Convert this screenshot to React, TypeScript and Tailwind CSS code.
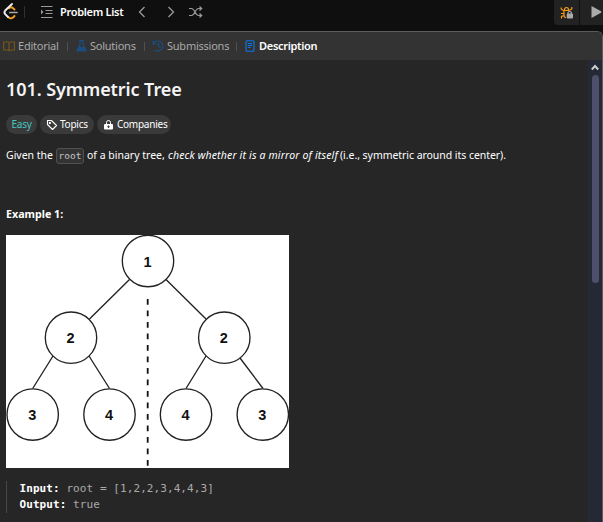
import React from "react";

const nodes = [
  { x: 142, y: 26, n: 1 },
  { x: 65, y: 102.7, n: 2 },
  { x: 218.3, y: 102.7, n: 2 },
  { x: 26.7, y: 179.5, n: 3 },
  { x: 103.5, y: 179.5, n: 4 },
  { x: 180, y: 179.5, n: 4 },
  { x: 256.8, y: 179.5, n: 3 },
];

function Tree() {
  return (
    <svg width="283" height="233" viewBox="0 0 283 233" className="block bg-white">
      <g stroke="#222" strokeWidth="1.35" fill="#fff">
        <path d="M123.500 44.500 83.500 84M160 44.500 200 84M47 121 26.700 153.500M83 121 103.500 153.500M200 121 180 153.500M234 123 257 153.500" />
        {nodes.map((c, i) => (
          <circle key={i} cx={c.x} cy={c.y} r="25.700" />
        ))}
      </g>
      <path d="M141.700 64V231" stroke="#111" strokeWidth="1.800" strokeDasharray="5.800 5.700" />
      {nodes.map((c, i) => (
        <text key={i} x={c.x - 0.5} y={c.y + 5.5} textAnchor="middle" fill="#111" className="font-['Liberation_Sans'] text-[14.500px] font-bold">
          {c.n}
        </text>
      ))}
    </svg>
  );
}

function Header() {
  return (
    <header className="flex h-[31px] shrink-0 items-start bg-[#0f0f0f]">
      <svg width="20" height="24" viewBox="0 0 20 24" fill="none" strokeWidth="1.900" strokeLinecap="round" className="shrink-0">
        <path d="M8.500 17.200Q10.800 19.300 13 17.500L14.500 16M9 8.200Q11 6.500 12.800 8L14.500 9.500" stroke="#f5a11c" />
        <path d="M12 4 5.200 10.500Q3.700 12.300 5.200 14.200L8 17" stroke="#eee" />
        <path d="M9.800 12.500H17" stroke="#aaa" strokeWidth="1.700" />
      </svg>
      <span className="mt-1.5 ml-1 h-3 w-px bg-[#303030]" />
      <svg width="13" height="12" viewBox="0 0 13 12" className="mt-1.5 ml-[15px]" stroke="#999" fill="#999">
        <path d="M1 .500H12.500M5.500 4.500H12.500M5.500 7.500H12.500M1 11.500H12.500" />
        <path d="M1 3.500 3.500 6 1 8.500Z" stroke="none" />
      </svg>
      <span className="mt-1 ml-[7px] w-[64px] whitespace-nowrap text-[11px] leading-4 font-semibold tracking-[-0.300px] text-white">Problem List</span>
      <svg width="8" height="12" viewBox="0 0 8 12" className="mt-1.5 ml-[14px]" fill="none" stroke="#999" strokeWidth="1.300"><path d="M6.500 1 1.500 6 6.500 11" /></svg>
      <svg width="8" height="12" viewBox="0 0 8 12" className="mt-1.5 ml-[21px]" fill="none" stroke="#999" strokeWidth="1.300"><path d="M1.500 1 6.500 6 1.500 11" /></svg>
      <svg width="14" height="12" viewBox="0 0 14 12" className="mt-1.5 ml-[14px]" fill="none" stroke="#999" strokeWidth="1.200">
        <path d="M0 2.500H2.500C6 2.500 6 9.500 9.500 9.500H13M0 9.500H2.500C6 9.500 6 2.500 9.500 2.500H13M10.500 .500 12.700 2.500 10.500 4.500M10.500 7.500 12.700 9.500 10.500 11.500" />
      </svg>
      <div className="ml-auto flex h-[25px] w-[49px] gap-px">
        <div className="flex w-[25px] justify-center rounded-bl bg-[#222]">
          <svg width="14" height="14" viewBox="0 0 14 14" className="mt-[6px]" fill="none" stroke="#f59b16" strokeWidth="1.200">
            <path d="M4.500 4Q4.500 1.500 6.500 1.500T8.500 4M4 4.500H9M4 4.500V9Q4 11.500 6 11.500M1.200 1.500V3L4 5M11.800 1V3L9 4.500M1 7.500H4M4 9.500 1.500 10.500V12.500" />
            <path d="M8 8V6.800Q8 5.500 9.700 5.500T11.400 6.800V8" stroke="#aaa" /><rect x="6.700" y="7.500" width="6.300" height="5" rx="1" fill="#aaa" stroke="none" />
          </svg>
        </div>
        <div className="flex flex-1 bg-[#222]">
          <svg width="12" height="14" viewBox="0 0 12 14" className="mt-[5px] ml-[10px]" fill="#aaa"><path d="M1.500 1 11 6.300Q12 7 11 7.700L1.500 13Z" /></svg>
        </div>
      </div>
    </header>
  );
}

const Divider = () => <span className="ml-[7px] h-[9px] w-px bg-[#505050]" />;

function Tabs() {
  return (
    <nav className="flex h-[28px] shrink-0 items-center bg-[#333] pl-[3px] text-[11px] tracking-[-0.240px] text-[#aaa]">
      <svg width="12" height="11" viewBox="0 0 12 11" fill="none" stroke="#735719" strokeWidth="1.200"><path d="M.600 1H4.500Q6 1 6 2.500V10Q5.500 9 4.500 9H.600ZM11.400 1H7.500Q6 1 6 2.500V10Q6.500 9 7.500 9H11.400Z" /></svg>
      <span className="ml-[3px] w-[42px] whitespace-nowrap">Editorial</span>
      <Divider />
      <svg width="11" height="12" viewBox="0 0 11 12" className="ml-2" fill="#1c4d80"><path d="M3 0H8V1H7.500V4L10.500 10Q11 11.500 9.500 11.500H1.500Q0 11.500 .500 10L3.500 4V1H3ZM4.700 1V4.500L3.400 7H7.600L6.300 4.500V1Z" /></svg>
      <span className="ml-[3px] w-[47px] whitespace-nowrap">Solutions</span>
      <Divider />
      <svg width="12" height="12" viewBox="0 0 12 12" className="ml-[7px]" fill="none" stroke="#1c4d80" strokeWidth="1.200"><path d="M1 .500V4H4.500M1.200 4A5 5 0 1 1 3 10.200M6.500 3V6.500L8.500 7.500" /></svg>
      <span className="ml-[3px] w-[62px] whitespace-nowrap">Submissions</span>
      <Divider />
      <svg width="10" height="12" viewBox="0 0 10 12" className="ml-2" fill="none" stroke="#0878eb" strokeWidth="1.100"><rect x="1" y=".700" width="8" height="10.600" rx="1" /><path d="M2.800 3.500H7.200M2.800 5.500H7.200M2.800 7.500H5.500" /></svg>
      <span className="ml-1 whitespace-nowrap font-semibold tracking-[-0.300px] text-white">Description</span>
    </nav>
  );
}

export default function App() {
  return (
    <div className="flex h-[522px] w-[603px] flex-col overflow-hidden bg-[#0f0f0f] font-['Noto_Sans',sans-serif]">
      <Header />
      <main className="flex min-h-0 flex-1 flex-col overflow-hidden rounded-tr-[6px] border-t border-r border-[#5b5b5b] bg-[#262626]">
        <Tabs />
        <div className="flex min-h-0 flex-1">
          <section className="min-w-0 flex-1 pl-[6px] text-[10.500px] text-white">
            <h1 className="mt-[17px] h-6 whitespace-nowrap text-[18px] leading-6 font-semibold tracking-[-0.080px] text-[#f5f5f5]">101. Symmetric Tree</h1>
            <div className="mt-[14px] flex h-[19px] gap-[3px] text-[10px] tracking-[-0.250px]">
              <span className="flex w-[31px] items-center justify-center rounded-full bg-[#3a3a3a] text-[#46c6c2]">Easy</span>
              <span className="flex w-[54px] items-center rounded-full bg-[#3a3a3a] pl-[6px] whitespace-nowrap">
                <svg width="12" height="12" viewBox="0 0 12 12" className="mr-[2px] shrink-0" fill="none" stroke="#fff" strokeWidth="1.100"><path d="M1.500 1.500V5.500L6.500 10.500 10.500 6.500 5.500 1.500Z" strokeLinejoin="round" /><circle cx="3.900" cy="4" r=".600" /></svg>Topics
              </span>
              <span className="flex w-[74px] items-center rounded-full bg-[#3a3a3a] pl-[7px] whitespace-nowrap">
                <svg width="9" height="10" viewBox="0 0 9 10" className="mr-1 shrink-0" fill="none" stroke="#fff"><path d="M2.500 5V2.500Q2.500 .500 4.500 .500T6.500 2.500V5" /><rect x="0" y="4" width="9" height="5.500" rx="1" fill="#fff" stroke="none" /><path d="M4.500 5.500V8M3.300 6.700H5.700" stroke="#3a3a3a" /></svg>Companies
              </span>
            </div>
            <p className="mt-[14px] flex h-4 items-center whitespace-pre">
              <span className="w-[50px]">Given the</span>
              <code className="flex h-[16px] w-[28px] items-center justify-center rounded-[3px] border border-[#505050] bg-[#333] font-['DejaVu_Sans_Mono'] text-[9.500px] text-[#c5c5c5]">root</code>
              <span className="ml-[3px] w-[81px]">of a binary tree,</span>
              <em className="w-[172px] tracking-[0.160px]">check whether it is a mirror of itself</em>
              <span className="tracking-[-0.050px]">(i.e., symmetric around its center).</span>
            </p>
            <p className="mt-[42px] h-4 text-[10.700px] leading-4 font-bold">Example 1:</p>
            <div className="mt-[13px]"><Tree /></div>
            <pre className="mt-[13px] h-8 border-l border-[#484848] pl-[12.500px] font-['DejaVu_Sans_Mono'] text-[11px] leading-4 tracking-[0.080px] text-[#aaa]"><b className="text-white">Input:</b>{" root = [1,2,2,3,4,4,3]\n"}<b className="text-white">Output:</b>{" true"}</pre>
          </section>
          <aside className="flex w-[14px] shrink-0 flex-col items-center bg-[#252935]">
            <svg width="8" height="7" viewBox="0 0 8 7" className="mt-1" fill="none" stroke="#ccc" strokeWidth="2"><path d="M.800 5.500 4 2 7.200 5.500" /></svg>
            <span className="mt-1 h-[208px] w-[7px] rounded-full bg-[#4e506b]" />
          </aside>
        </div>
      </main>
    </div>
  );
}
